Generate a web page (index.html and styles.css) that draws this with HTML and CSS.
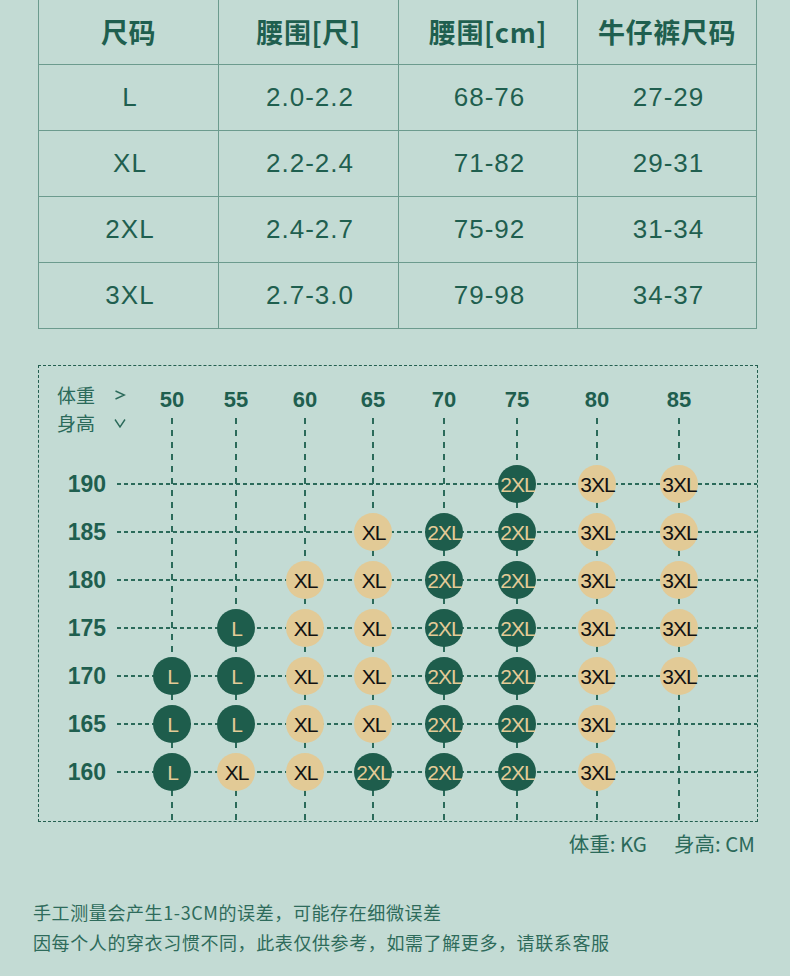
FILE: index.html
```html
<!DOCTYPE html>
<html lang="zh-CN">
<head>
<meta charset="utf-8">
<title>尺码表</title>
<link rel="stylesheet" href="styles.css">
</head>
<body>
<div class="page">
  <div class="size-table">
    <div class="th">尺码</div><div class="th">腰围[尺]</div><div class="th">腰围[cm]</div><div class="th">牛仔裤尺码</div>
    <div class="td">L</div><div class="td">2.0-2.2</div><div class="td">68-76</div><div class="td">27-29</div>
    <div class="td">XL</div><div class="td">2.2-2.4</div><div class="td">71-82</div><div class="td">29-31</div>
    <div class="td">2XL</div><div class="td">2.4-2.7</div><div class="td">75-92</div><div class="td">31-34</div>
    <div class="td">3XL</div><div class="td">2.7-3.0</div><div class="td">79-98</div><div class="td">34-37</div>
  </div>

  <div class="chart">
    <div class="chart-head cols">
      <div class="axis">
        <div class="axis-line"><span>体重</span><svg class="chev" width="12" height="10" viewBox="0 0 12 10"><path d="M1.5 1 L10.5 5 L1.5 9" fill="none" stroke="#2b6a5a" stroke-width="1.4"/></svg></div>
        <div class="axis-line"><span>身高</span><svg class="chev" width="12" height="10" viewBox="0 0 12 10"><path d="M1 1.5 L6 9 L11 1.5" fill="none" stroke="#2b6a5a" stroke-width="1.4"/></svg></div>
      </div>
      <div class="hcell"><div class="num">50</div><div class="vline"></div></div>
      <div class="hcell"><div class="num">55</div><div class="vline"></div></div>
      <div class="hcell"><div class="num">60</div><div class="vline"></div></div>
      <div class="hcell"><div class="num">65</div><div class="vline"></div></div>
      <div class="hcell"><div class="num">70</div><div class="vline"></div></div>
      <div class="hcell"><div class="num">75</div><div class="vline"></div></div>
      <div class="hcell"><div class="num">80</div><div class="vline"></div></div>
      <div class="hcell"><div class="num">85</div><div class="vline"></div></div>
    </div>

    <div class="row cols">
      <div class="rlabel">190</div>
      <div class="cell"></div><div class="cell"></div><div class="cell"></div><div class="cell"></div><div class="cell"></div>
      <div class="cell"><span class="dot dk">2XL</span></div>
      <div class="cell"><span class="dot lt">3XL</span></div>
      <div class="cell"><span class="dot lt">3XL</span></div>
    </div>
    <div class="row cols">
      <div class="rlabel">185</div>
      <div class="cell"></div><div class="cell"></div><div class="cell"></div>
      <div class="cell"><span class="dot lt">XL</span></div>
      <div class="cell"><span class="dot dk">2XL</span></div>
      <div class="cell"><span class="dot dk">2XL</span></div>
      <div class="cell"><span class="dot lt">3XL</span></div>
      <div class="cell"><span class="dot lt">3XL</span></div>
    </div>
    <div class="row cols">
      <div class="rlabel">180</div>
      <div class="cell"></div><div class="cell"></div>
      <div class="cell"><span class="dot lt">XL</span></div>
      <div class="cell"><span class="dot lt">XL</span></div>
      <div class="cell"><span class="dot dk">2XL</span></div>
      <div class="cell"><span class="dot dk">2XL</span></div>
      <div class="cell"><span class="dot lt">3XL</span></div>
      <div class="cell"><span class="dot lt">3XL</span></div>
    </div>
    <div class="row cols">
      <div class="rlabel">175</div>
      <div class="cell"></div>
      <div class="cell"><span class="dot dk">L</span></div>
      <div class="cell"><span class="dot lt">XL</span></div>
      <div class="cell"><span class="dot lt">XL</span></div>
      <div class="cell"><span class="dot dk">2XL</span></div>
      <div class="cell"><span class="dot dk">2XL</span></div>
      <div class="cell"><span class="dot lt">3XL</span></div>
      <div class="cell"><span class="dot lt">3XL</span></div>
    </div>
    <div class="row cols">
      <div class="rlabel">170</div>
      <div class="cell"><span class="dot dk">L</span></div>
      <div class="cell"><span class="dot dk">L</span></div>
      <div class="cell"><span class="dot lt">XL</span></div>
      <div class="cell"><span class="dot lt">XL</span></div>
      <div class="cell"><span class="dot dk">2XL</span></div>
      <div class="cell"><span class="dot dk">2XL</span></div>
      <div class="cell"><span class="dot lt">3XL</span></div>
      <div class="cell"><span class="dot lt">3XL</span></div>
    </div>
    <div class="row cols">
      <div class="rlabel">165</div>
      <div class="cell"><span class="dot dk">L</span></div>
      <div class="cell"><span class="dot dk">L</span></div>
      <div class="cell"><span class="dot lt">XL</span></div>
      <div class="cell"><span class="dot lt">XL</span></div>
      <div class="cell"><span class="dot dk">2XL</span></div>
      <div class="cell"><span class="dot dk">2XL</span></div>
      <div class="cell"><span class="dot lt">3XL</span></div>
      <div class="cell"></div>
    </div>
    <div class="row cols">
      <div class="rlabel">160</div>
      <div class="cell"><span class="dot dk">L</span></div>
      <div class="cell"><span class="dot lt">XL</span></div>
      <div class="cell"><span class="dot lt">XL</span></div>
      <div class="cell"><span class="dot dk">2XL</span></div>
      <div class="cell"><span class="dot dk">2XL</span></div>
      <div class="cell"><span class="dot dk">2XL</span></div>
      <div class="cell"><span class="dot lt">3XL</span></div>
      <div class="cell"></div>
    </div>
    <div class="tail cols">
      <div class="spacer"></div>
      <div class="cell"></div><div class="cell"></div><div class="cell"></div><div class="cell"></div>
      <div class="cell"></div><div class="cell"></div><div class="cell"></div><div class="cell"></div>
    </div>
  </div>

  <div class="legend"><span>体重: KG</span><span>身高: CM</span></div>

  <div class="notes">
    <p>手工测量会产生1-3CM的误差，可能存在细微误差</p>
    <p>因每个人的穿衣习惯不同，此表仅供参考，如需了解更多，请联系客服</p>
  </div>
</div>
</body>
</html>
```

FILE: styles.css
```css
html, body {
  margin: 0;
  padding: 0;
}
body {
  background: #c3dbd4;
  color: #1f5f4f;
  font-family: "Noto Sans CJK SC", "Noto Sans", sans-serif;
}
.page {
  width: 790px;
  height: 976px;
  overflow: hidden;
}

/* ---------- size table ---------- */
.size-table {
  margin-left: 38px;
  width: 718px;
  display: grid;
  grid-template-columns: 180px 180px 179px 179px;
  grid-template-rows: 65px repeat(4, 66px);
  border-left: 1px solid #6c9b8e;
  box-sizing: border-box;
}
.th, .td {
  display: flex;
  align-items: center;
  justify-content: center;
  border-right: 1px solid #6c9b8e;
  border-bottom: 1px solid #6c9b8e;
  box-sizing: border-box;
}
.th {
  font-family: "Noto Sans CJK SC", sans-serif;
  font-weight: 700;
  font-size: 27px;
  letter-spacing: 0.6px;
  padding-bottom: 1px;
}
.td {
  font-family: "Liberation Sans", Arial, sans-serif;
  font-size: 26px;
  letter-spacing: 1px;
  padding-left: 3px;
}

/* ---------- chart ---------- */
.chart {
  margin: 36px 0 0 38px;
  width: 720px;
  height: 457px;
  box-sizing: border-box;
  border: 1px dashed #245f50;
}
.cols {
  display: grid;
  grid-template-columns: 78px 23px 64px 64px 74px 62px 80px 66px 94px 70px 43px;
}
.chart-head {
  height: 94px;
}
.axis {
  grid-column: 1 / 3;
  padding: 15px 0 0 18px;
  font-size: 19px;
  line-height: 28px;
  color: #2b6a5a;
}
.axis-line {
  display: flex;
  align-items: center;
}
.chev {
  margin-left: 19px;
}
.hcell {
  display: flex;
  flex-direction: column;
}
.num {
  height: 52px;
  box-sizing: border-box;
  padding-top: 23px;
  text-align: center;
  font-family: "Liberation Sans", Arial, sans-serif;
  font-weight: 700;
  font-size: 22px;
  line-height: 22px;
}
.vline {
  flex: 1;
  background: repeating-linear-gradient(180deg, #2b6a5a 0 6px, transparent 6px 12px) center top / 2px 100% no-repeat;
}
.row {
  height: 48px;
  background: repeating-linear-gradient(90deg, #2b6a5a 0 4px, transparent 4px 7px) 78px center / 640px 2px no-repeat;
}
.rlabel {
  grid-column: 1 / 3;
  align-self: center;
  text-align: right;
  padding-right: 34px;
  font-family: "Liberation Sans", Arial, sans-serif;
  font-weight: 700;
  font-size: 23px;
  line-height: 23px;
}
.cell {
  display: flex;
  align-items: center;
  justify-content: center;
  background: repeating-linear-gradient(180deg, transparent 0 6px, #2b6a5a 6px 12px) center top / 2px 100% no-repeat;
}
.tail {
  height: 25px;
}
.spacer {
  grid-column: 1 / 3;
}
.dot {
  width: 38px;
  height: 38px;
  border-radius: 50%;
  display: flex;
  align-items: center;
  justify-content: center;
  font-family: "Liberation Sans", Arial, sans-serif;
  font-size: 21px;
  letter-spacing: -1px;
  text-indent: 1px;
  line-height: 1;
  white-space: nowrap;
}
.dk {
  background: #1e5d4c;
  color: #e3cb97;
}
.lt {
  background: #e2ca96;
  color: #121212;
}

/* ---------- legend & notes ---------- */
.legend {
  margin-top: 9px;
  padding-right: 35px;
  display: flex;
  justify-content: flex-end;
  gap: 27px;
  font-size: 20.5px;
  line-height: 24px;
  color: #2b6a5a;
}
.notes {
  margin-top: 42px;
  padding-left: 33px;
  font-size: 18px;
  letter-spacing: 0.6px;
  line-height: 30px;
  color: #2e6b5b;
}
.notes p {
  margin: 0;
}
```
